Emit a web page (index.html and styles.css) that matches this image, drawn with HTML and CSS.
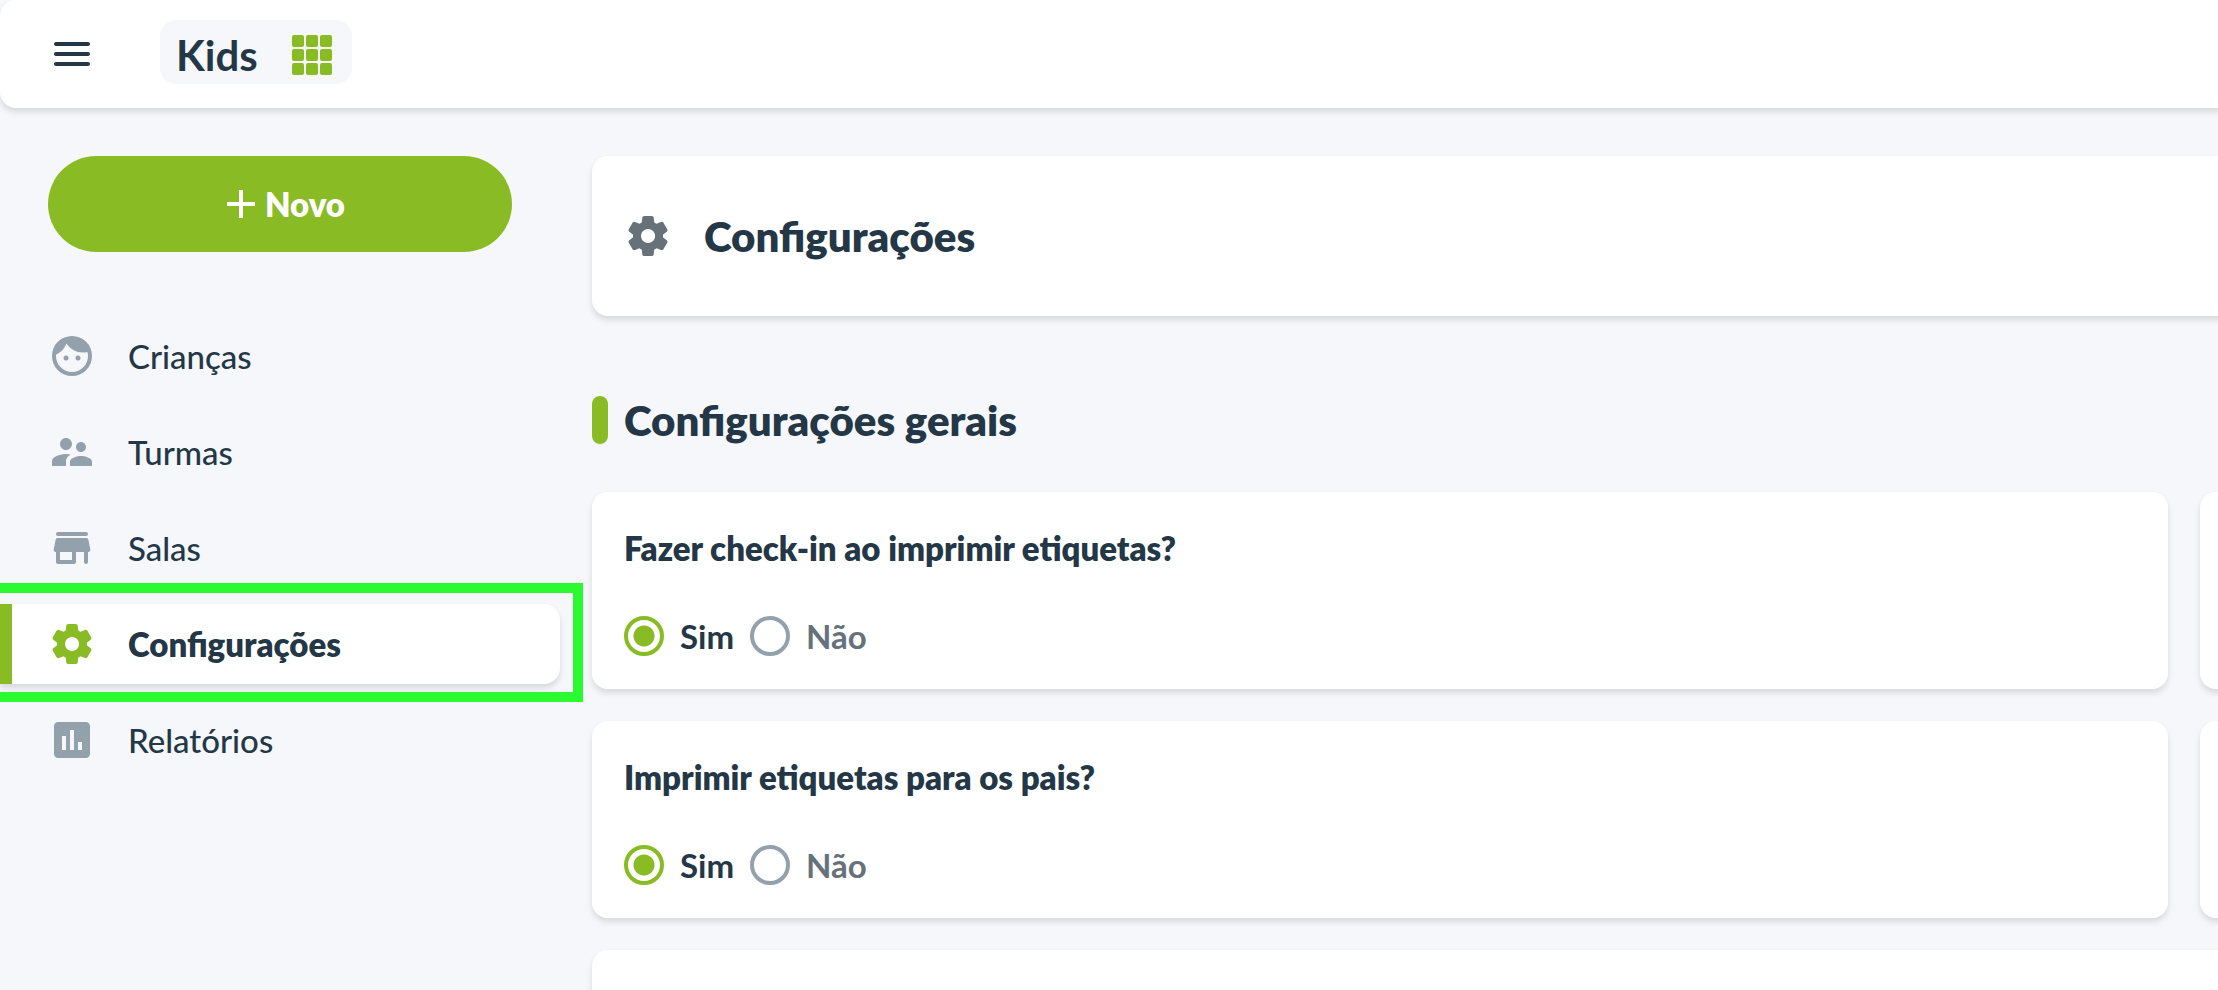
FILE: index.html
```html
<!DOCTYPE html>
<html lang="pt-BR">
<head>
    <meta charset="UTF-8">
    <meta name="viewport" content="width=device-width, initial-scale=1.0">
    <title>Kids - Configurações</title>
    <link rel="stylesheet" href="styles.css">
</head>
<body>
    <header class="topbar">
        <button class="menu-toggle" type="button" aria-label="Menu">
            <svg viewBox="0 0 24 24"><path d="M4 18h16c.55 0 1-.45 1-1s-.45-1-1-1H4c-.55 0-1 .45-1 1s.45 1 1 1zm0-5h16c.55 0 1-.45 1-1s-.45-1-1-1H4c-.55 0-1 .45-1 1s.45 1 1 1zM3 7c0 .55.45 1 1 1h16c.55 0 1-.45 1-1s-.45-1-1-1H4c-.55 0-1 .45-1 1z"/></svg>
        </button>
        <button class="app-switch" type="button">
            <span>Kids</span>
            <svg viewBox="0 0 40 40">
                <rect x="0" y="0" width="12" height="12" rx="2"/>
                <rect x="14" y="0" width="12" height="12" rx="2"/>
                <rect x="28" y="0" width="12" height="12" rx="2"/>
                <rect x="0" y="14" width="12" height="12" rx="2"/>
                <rect x="14" y="14" width="12" height="12" rx="2"/>
                <rect x="28" y="14" width="12" height="12" rx="2"/>
                <rect x="0" y="28" width="12" height="12" rx="2"/>
                <rect x="14" y="28" width="12" height="12" rx="2"/>
                <rect x="28" y="28" width="12" height="12" rx="2"/>
            </svg>
        </button>
    </header>

    <div class="layout">
        <aside class="sidebar">
            <button class="btn-new" type="button">
                <svg viewBox="0 0 28 28"><path d="M12 0h4v12h12v4H16v12h-4V16H0v-4h12z"/></svg>
                <span>Novo</span>
            </button>
            <nav class="menu">
                <a href="#criancas">
                    <svg viewBox="0 0 24 24"><path fill-rule="evenodd" d="M12 2a10 10 0 1 0 0 20 10 10 0 0 0 0-20zM4 11.4c2.35-1.05 4.3-3.1 5.2-5.6A9.97 9.97 0 0 0 17.42 10.3c.78 0 1.53-.09 2.25-.26.21.56.33 1.26.33 1.96a8 8 0 0 1-16 0z"/><circle cx="9" cy="13" r="1.25"/><circle cx="15" cy="13" r="1.25"/></svg>
                    <span>Crianças</span>
                </a>
                <a href="#turmas">
                    <svg viewBox="0 0 24 24"><path d="M16.5 12c1.38 0 2.49-1.12 2.49-2.5S17.88 7 16.5 7C15.12 7 14 8.12 14 9.5s1.12 2.5 2.5 2.5zM9 11c1.66 0 2.99-1.34 2.99-3S10.66 5 9 5C7.34 5 6 6.34 6 8s1.34 3 3 3zm7.5 3c-1.83 0-5.5.92-5.5 2.75V19h11v-2.25c0-1.83-3.67-2.75-5.5-2.75zM9 13c-2.33 0-7 1.17-7 3.5V19h7v-2.25c0-.85.33-2.34 2.37-3.47C10.5 13.1 9.66 13 9 13z"/></svg>
                    <span>Turmas</span>
                </a>
                <a href="#salas">
                    <svg viewBox="0 0 24 24"><path d="M5 6h14c.55 0 1-.45 1-1s-.45-1-1-1H5c-.55 0-1 .45-1 1s.45 1 1 1zm15.16 1.8c-.09-.46-.5-.8-.98-.8H4.82c-.48 0-.89.34-.98.8l-1 5c-.12.62.35 1.2.98 1.2H4v5c0 .55.45 1 1 1h8c.55 0 1-.45 1-1v-5h4v5c0 .55.45 1 1 1s1-.45 1-1v-5h.18c.63 0 1.11-.58.98-1.2l-1-5zM12 18H6v-4h6v4z"/></svg>
                    <span>Salas</span>
                </a>
                <a class="active" href="#configuracoes">
                    <svg viewBox="0 0 24 24"><path d="M19.5 12c0-.23-.01-.45-.03-.68l1.86-1.41c.4-.3.51-.86.26-1.3l-1.87-3.23a.987.987 0 0 0-1.25-.42l-2.15.91c-.37-.26-.76-.49-1.17-.68l-.29-2.31c-.06-.5-.49-.88-.99-.88h-3.73c-.51 0-.94.38-1 .88l-.29 2.31c-.41.19-.8.42-1.17.68l-2.15-.91c-.46-.2-1-.02-1.25.42L2.41 8.62c-.25.44-.14.99.26 1.3l1.86 1.41a7.343 7.343 0 0 0 0 1.35l-1.86 1.41c-.4.3-.51.86-.26 1.3l1.87 3.23c.25.44.79.62 1.25.42l2.15-.91c.37.26.76.49 1.17.68l.29 2.31c.06.5.49.88.99.88h3.73c.5 0 .93-.38.99-.88l.29-2.31c.41-.19.8-.42 1.17-.68l2.15.91c.46.2 1 .02 1.25-.42l1.87-3.23c.25-.44.14-.99-.26-1.3l-1.86-1.41c.03-.23.04-.45.04-.68zm-7.46 3.5c-1.93 0-3.5-1.57-3.5-3.5s1.57-3.5 3.5-3.5 3.5 1.57 3.5 3.5-1.57 3.5-3.5 3.5z"/></svg>
                    <span>Configurações</span>
                </a>
                <a href="#relatorios">
                    <svg viewBox="0 0 24 24"><path d="M19 3H5c-1.1 0-2 .9-2 2v14c0 1.1.9 2 2 2h14c1.1 0 2-.9 2-2V5c0-1.1-.9-2-2-2zM9 17H7v-7h2v7zm4 0h-2V7h2v10zm4 0h-2v-4h2v4z"/></svg>
                    <span>Relatórios</span>
                </a>
            </nav>
        </aside>

        <main class="content">
            <div class="card page-title">
                <svg viewBox="0 0 24 24"><path d="M19.5 12c0-.23-.01-.45-.03-.68l1.86-1.41c.4-.3.51-.86.26-1.3l-1.87-3.23a.987.987 0 0 0-1.25-.42l-2.15.91c-.37-.26-.76-.49-1.17-.68l-.29-2.31c-.06-.5-.49-.88-.99-.88h-3.73c-.51 0-.94.38-1 .88l-.29 2.31c-.41.19-.8.42-1.17.68l-2.15-.91c-.46-.2-1-.02-1.25.42L2.41 8.62c-.25.44-.14.99.26 1.3l1.86 1.41a7.343 7.343 0 0 0 0 1.35l-1.86 1.41c-.4.3-.51.86-.26 1.3l1.87 3.23c.25.44.79.62 1.25.42l2.15-.91c.37.26.76.49 1.17.68l.29 2.31c.06.5.49.88.99.88h3.73c.5 0 .93-.38.99-.88l.29-2.31c.41-.19.8-.42 1.17-.68l2.15.91c.46.2 1 .02 1.25-.42l1.87-3.23c.25-.44.14-.99-.26-1.3l-1.86-1.41c.03-.23.04-.45.04-.68zm-7.46 3.5c-1.93 0-3.5-1.57-3.5-3.5s1.57-3.5 3.5-3.5 3.5 1.57 3.5 3.5-1.57 3.5-3.5 3.5z"/></svg>
                <h1>Configurações</h1>
            </div>

            <h2 class="section-title">Configurações gerais</h2>

            <div class="options">
                <fieldset class="card option">
                    <legend>Fazer check-in ao imprimir etiquetas?</legend>
                    <div class="radios">
                        <label><input type="radio" name="checkin" checked><span>Sim</span></label>
                        <label><input type="radio" name="checkin"><span>Não</span></label>
                    </div>
                </fieldset>
                <div class="card"></div>
                <fieldset class="card option">
                    <legend>Imprimir etiquetas para os pais?</legend>
                    <div class="radios">
                        <label><input type="radio" name="pais" checked><span>Sim</span></label>
                        <label><input type="radio" name="pais"><span>Não</span></label>
                    </div>
                </fieldset>
                <div class="card"></div>
                <div class="card wide"></div>
            </div>
        </main>
    </div>
</body>
</html>
```

FILE: styles.css
```css
* {
    box-sizing: border-box;
}
body {
    margin: 0;
    height: 100vh;
    overflow: hidden;
    font-family: 'Lato', 'Liberation Sans', sans-serif;
    font-size: 33px;
    line-height: 40px;
    color: #243746;
    background: #f5f7fb;
}
button {
    border: none;
    font: inherit;
    color: inherit;
    cursor: pointer;
}
svg {
    display: block;
    flex: none;
    width: 48px;
    height: 48px;
    fill: currentColor;
}
h1, h2 {
    margin: 0;
    font-size: 42px;
    line-height: 48px;
    font-weight: 800;
}

/* top bar */
.topbar {
    display: flex;
    align-items: center;
    gap: 64px;
    height: 108px;
    margin-right: -16px;
    padding: 0 48px;
    background: #fff;
    border-radius: 16px;
    box-shadow: 0 4px 6px rgba(0, 0, 0, 0.12);
}
.menu-toggle {
    padding: 0;
    background: none;
}
.app-switch {
    display: flex;
    align-items: center;
    justify-content: space-between;
    width: 192px;
    height: 64px;
    margin-bottom: 4px;
    padding: 6px 20px 0 16px;
    border-radius: 16px;
    background: #f5f7fb;
    font-size: 42px;
    font-weight: 700;
}
.app-switch svg {
    width: 40px;
    height: 40px;
    color: #89bc24;
}

.layout {
    display: flex;
    padding-top: 48px;
}

/* sidebar */
.sidebar {
    flex: none;
    width: 592px;
}
.btn-new {
    display: flex;
    align-items: center;
    justify-content: center;
    gap: 10px;
    width: 464px;
    height: 96px;
    margin: 0 48px;
    padding: 0 0 0 12px;
    border-radius: 48px;
    background: #89bc24;
    color: #fff;
    font-weight: 800;
}
.btn-new svg {
    width: 28px;
    height: 28px;
}
.menu {
    display: flex;
    flex-direction: column;
    gap: 16px;
    margin-top: 64px;
}
.menu a {
    display: flex;
    align-items: center;
    gap: 32px;
    width: 560px;
    height: 80px;
    padding-left: 48px;
    color: inherit;
    font-weight: 500;
    text-decoration: none;
}
.menu svg {
    color: #92a1ab;
}
.menu .active {
    position: relative;
    background: #fff;
    border-left: 12px solid #89bc24;
    border-radius: 0 16px 16px 0;
    padding-left: 36px;
    box-shadow: 0 4px 6px rgba(0, 0, 0, 0.12);
    font-weight: 800;
}
.menu .active svg {
    color: #89bc24;
}
/* highlight frame around the current item */
.menu .active::after {
    content: "";
    position: absolute;
    inset: -21px -23px -18px -24px;
    border: 10px solid #2afa2f;
}

/* content */
.content {
    flex: 1;
    min-width: 0;
}
.card {
    background: #fff;
    border-radius: 16px;
    box-shadow: 0 4px 6px rgba(0, 0, 0, 0.12);
}
.page-title {
    display: flex;
    align-items: center;
    gap: 32px;
    height: 160px;
    margin-right: -32px;
    padding: 0 32px;
}
.page-title svg {
    color: #66717a;
}
.section-title {
    display: flex;
    gap: 16px;
    margin: 80px 0 48px;
}
.section-title::before {
    content: "";
    width: 16px;
    height: 48px;
    border-radius: 8px;
    background: #89bc24;
}
.options {
    display: grid;
    grid-template-columns: repeat(2, calc(100% - 50px));
    gap: 32px;
}
.wide {
    grid-column: span 2;
    min-height: 197px;
}
.option {
    min-width: 0;
    margin: 0;
    padding: 36px 32px 33px;
    border: none;
}
.option legend {
    float: left;
    width: 100%;
    padding: 0;
    font-weight: 800;
}
.radios {
    clear: both;
    display: flex;
    gap: 16px;
    padding-top: 48px;
}
.radios label {
    display: flex;
    align-items: center;
    gap: 16px;
    color: #66717a;
    font-weight: 700;
}
.radios label:has(:checked) {
    color: #243746;
}
.radios input {
    appearance: none;
    width: 40px;
    height: 40px;
    margin: 0;
    border: 4px solid #92a1ab;
    border-radius: 50%;
}
.radios input:checked {
    border-color: #89bc24;
    background: radial-gradient(circle, #89bc24 10px, transparent 11px);
}
```
